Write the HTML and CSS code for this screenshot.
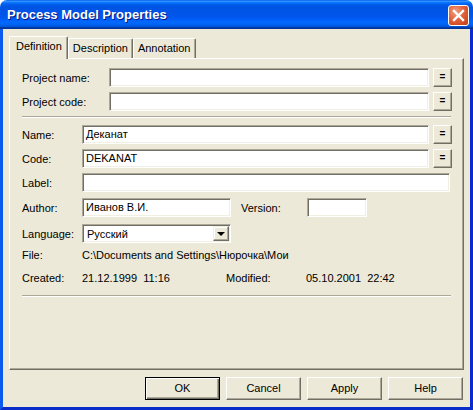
FILE: index.html
```html
<!DOCTYPE html>
<html>
<head>
  <title>Process Model Properties</title>
  <link rel="stylesheet" href="styles.css">
</head>
<body>
  <div class="window">
    <div class="titlebar">
      <span class="title">Process Model Properties</span>
      <div class="close">
        <svg width="13" height="13" viewBox="0 0 13 13">
          <path d="M2 2 L11 11 M11 2 L2 11" stroke="#fff" stroke-width="2.4" stroke-linecap="square"/>
        </svg>
      </div>
    </div>

    <div class="frame">
      <!-- Вкладки -->
      <div class="tabs">
        <div class="tab active">Definition</div>
        <div class="tab">Description</div>
        <div class="tab">Annotation</div>
      </div>

      <div class="panel">
        <div class="row">
          <span class="lbl lbl-wide">Project name:</span>
          <div class="field w-proj"></div>
          <div class="eq">=</div>
        </div>
        <div class="row">
          <span class="lbl lbl-wide">Project code:</span>
          <div class="field w-proj"></div>
          <div class="eq">=</div>
        </div>

        <div class="sep"></div>

        <div class="row">
          <span class="lbl">Name:</span>
          <div class="field w-name">Деканат</div>
          <div class="eq">=</div>
        </div>
        <div class="row">
          <span class="lbl">Code:</span>
          <div class="field w-name">DEKANAT</div>
          <div class="eq">=</div>
        </div>
        <div class="row row-label">
          <span class="lbl">Label:</span>
          <div class="field w-label"></div>
        </div>
        <div class="row row-author">
          <span class="lbl">Author:</span>
          <div class="field w-author">Иванов В.И.</div>
          <span class="lbl lbl-version">Version:</span>
          <div class="field w-version"></div>
        </div>
        <div class="row row-lang">
          <span class="lbl">Language:</span>
          <div class="combo">
            <span class="combo-text">Русский</span>
            <div class="combo-btn"><span class="arrow"></span></div>
          </div>
        </div>
        <div class="row row-file">
          <span class="lbl">File:</span>
          <span class="value">C:\Documents and Settings\Нюрочка\Мои</span>
        </div>
        <div class="row row-created">
          <span class="lbl">Created:</span>
          <span class="value date">21.12.1999  11:16</span>
          <span class="lbl lbl-mod">Modified:</span>
          <span class="value">05.10.2001  22:42</span>
        </div>

        <div class="sep"></div>
      </div>

      <!-- Кнопки -->
      <div class="buttons">
        <div class="btn default">OK</div>
        <div class="btn">Cancel</div>
        <div class="btn">Apply</div>
        <div class="btn">Help</div>
      </div>
    </div>
  </div>
</body>
</html>
```

FILE: styles.css
```css
body {
  margin: 0;
  width: 473px;
  height: 410px;
  overflow: hidden;
  background: #ffffff;
  font-family: "Liberation Sans", Arial, sans-serif;
  font-size: 11px;
  color: #000000;
}
.window {
  width: 473px;
  height: 410px;
  display: flex;
  flex-direction: column;
}
.titlebar {
  height: 29px;
  box-sizing: border-box;
  display: flex;
  justify-content: space-between;
  align-items: flex-start;
  padding: 0 4px 0 7px;
  border-radius: 7px 7px 0 0;
  background: linear-gradient(to bottom, #0058ee 0%, #3593ff 4%, #288eff 6%, #127dff 8%, #036ffc 10%, #0262ee 14%, #0057e5 20%, #0054e3 24%, #0055eb 56%, #005bf5 66%, #026afe 76%, #0062ef 86%, #0052d6 92%, #0040ab 94%, #003092 100%);
}
.title {
  color: #ffffff;
  font-weight: bold;
  font-size: 13px;
  line-height: 29px;
  text-shadow: 1px 1px 0 #0a1883;
}
.close {
  width: 21px;
  height: 21px;
  box-sizing: border-box;
  margin-top: 5px;
  border: 1px solid #ffffff;
  border-radius: 3px;
  background: radial-gradient(circle at 35% 30%, #f0a080 0%, #e2623c 45%, #c23a15 100%);
  display: flex;
  align-items: center;
  justify-content: center;
}
.close svg {
  display: block;
}
.frame {
  flex: 1;
  background: #ece9d8;
  border-left: 3px solid #0b5af0;
  border-right: 3px solid #0a2ccf;
  border-bottom: 3px solid #0a2cc8;
  padding: 7px 6px 0 6px;
}
.tabs {
  display: flex;
  align-items: flex-end;
  height: 22px;
}
.tab {
  height: 20px;
  box-sizing: border-box;
  padding: 0 4px;
  line-height: 19px;
  border: 1px solid #ffffff;
  border-bottom: none;
  border-right-color: #716f64;
  border-radius: 2px 2px 0 0;
  box-shadow: inset -1px 0 0 #aca899;
  background: #ece9d8;
}
.tab.active {
  height: 23px;
  margin-bottom: -1px;
  padding: 0 5px 0 6px;
  line-height: 19px;
  position: relative;
  z-index: 1;
}
.panel {
  height: 312px;
  box-sizing: border-box;
  border: 1px solid #ffffff;
  border-right-color: #716f64;
  border-bottom-color: #716f64;
  box-shadow: inset -1px -1px 0 #aca899;
  padding: 9px 10px 0 12px;
}
.row {
  display: flex;
  align-items: center;
  height: 19px;
  margin-bottom: 5px;
}
.row-label {
  margin-bottom: 6px;
}
.row-author {
  margin-bottom: 7px;
}
.row-lang {
  margin-bottom: 2px;
}
.row-file {
  margin-bottom: 4px;
}
.row-created {
  margin-bottom: 8px;
}
.lbl {
  width: 60px;
  flex: none;
  white-space: nowrap;
}
.lbl-wide {
  width: 87px;
}
.lbl-version {
  width: 66px;
  margin-left: 10px;
}
.lbl-mod {
  width: 80px;
}
.value {
  white-space: pre;
}
.date {
  width: 144px;
}
.field {
  height: 19px;
  box-sizing: border-box;
  flex: none;
  background: #ffffff;
  border: 1px solid;
  border-color: #aca899 #ffffff #ffffff #aca899;
  box-shadow: inset 1px 1px 0 #716f64, inset -1px -1px 0 #f1efe2;
  padding: 0 3px;
  line-height: 17px;
  white-space: nowrap;
}
.w-proj {
  width: 320px;
}
.w-name {
  width: 347px;
}
.w-label {
  width: 368px;
}
.w-author {
  width: 149px;
}
.w-version {
  width: 60px;
}
.eq {
  width: 19px;
  height: 19px;
  box-sizing: border-box;
  margin-left: 4px;
  border: 1px solid;
  border-color: #ffffff #716f64 #716f64 #ffffff;
  box-shadow: inset -1px -1px 0 #aca899;
  text-align: center;
  line-height: 16px;
  font-weight: bold;
  font-size: 10px;
}
.combo {
  width: 149px;
  height: 19px;
  box-sizing: border-box;
  display: flex;
  align-items: center;
  justify-content: space-between;
  background: #ffffff;
  border: 1px solid;
  border-color: #aca899 #ffffff #ffffff #aca899;
  box-shadow: inset 1px 1px 0 #716f64, inset -1px -1px 0 #f1efe2;
  padding: 1px 1px 1px 4px;
}
.combo-btn {
  width: 16px;
  height: 15px;
  box-sizing: border-box;
  background: #ece9d8;
  border: 1px solid;
  border-color: #f1efe2 #716f64 #716f64 #f1efe2;
  box-shadow: inset -1px -1px 0 #aca899, inset 1px 1px 0 #ffffff;
  display: flex;
  align-items: center;
  justify-content: center;
}
.arrow {
  width: 0;
  height: 0;
  border-left: 4px solid transparent;
  border-right: 4px solid transparent;
  border-top: 4px solid #000000;
  margin-top: 1px;
}
.sep {
  width: 429px;
  border-top: 1px solid #aca899;
  border-bottom: 1px solid #ffffff;
  margin: 3px 0 7px;
}
.buttons {
  display: flex;
  justify-content: flex-end;
  gap: 6px;
  margin: 7px 1px 0 0;
}
.btn {
  width: 75px;
  height: 23px;
  box-sizing: border-box;
  border: 1px solid;
  border-color: #ffffff #716f64 #716f64 #ffffff;
  box-shadow: inset -1px -1px 0 #aca899;
  background: #ece9d8;
  text-align: center;
  line-height: 21px;
}
.btn.default {
  border-color: #000000;
  box-shadow: inset 1px 1px 0 #ffffff, inset -1px -1px 0 #716f64, inset -2px -2px 0 #aca899;
}
```
